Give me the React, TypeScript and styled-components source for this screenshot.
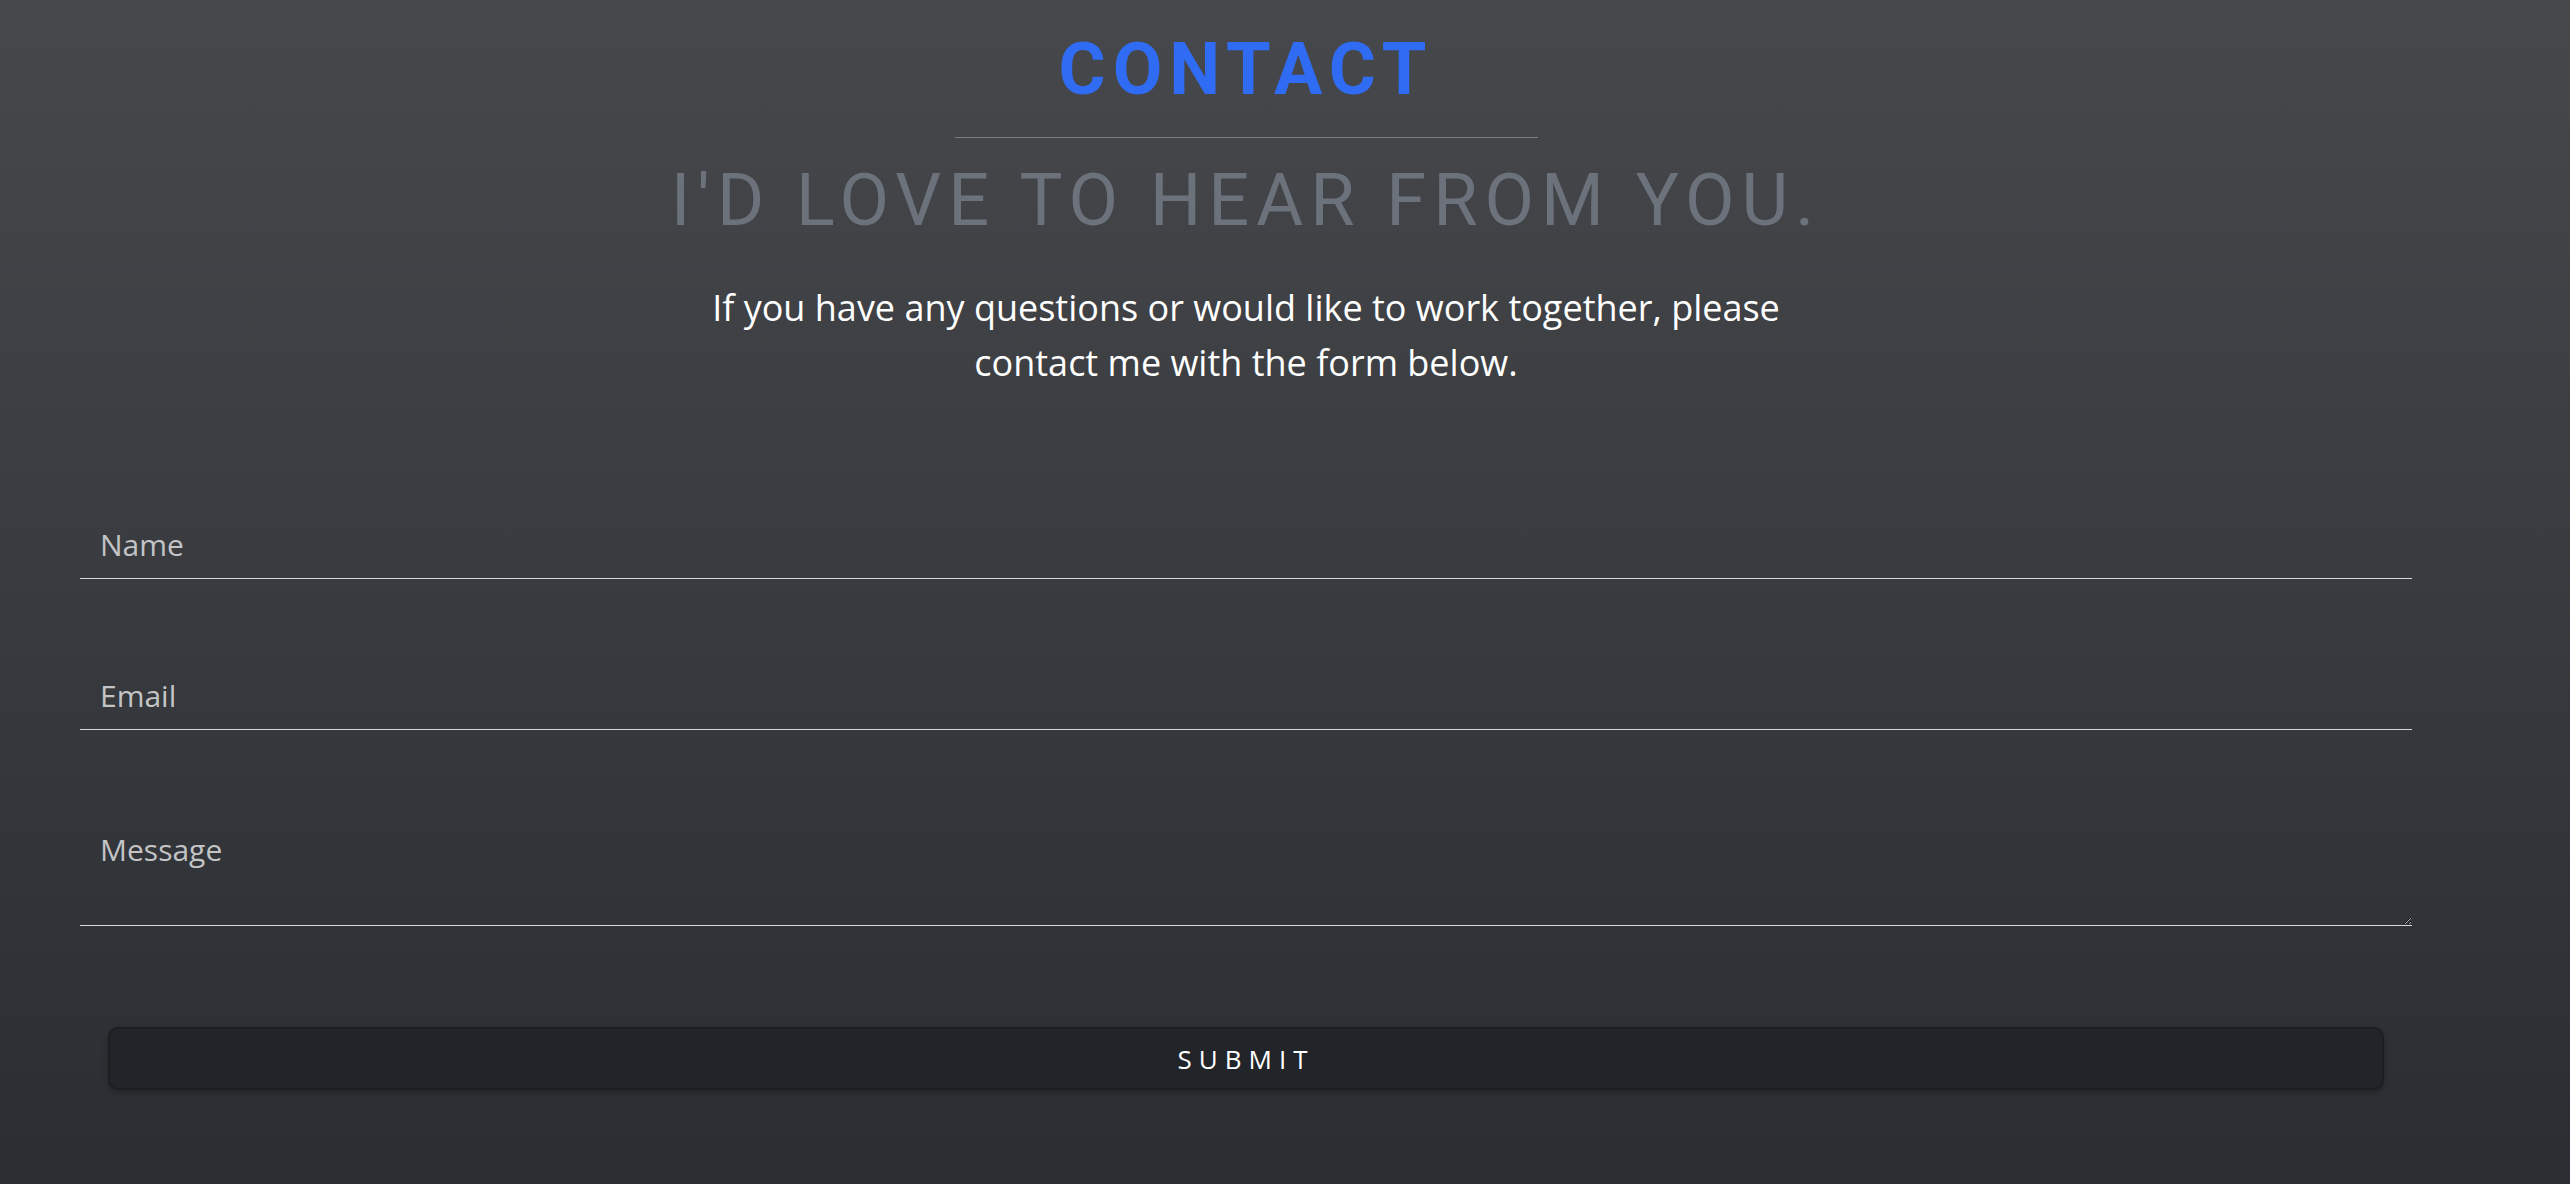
import React from "react";
import styled, { createGlobalStyle } from "styled-components";

const GlobalStyle = createGlobalStyle`
  html, body {
    margin: 0;
    padding: 0;
  }
  body {
    min-height: 100vh;
    background: linear-gradient(180deg, #46484c 0%, #2a2d31 100%);
    background-attachment: fixed;
    font-family: "Open Sans", "Noto Sans", sans-serif;
  }
  * { box-sizing: border-box; }
`;

const Section = styled.section`
  width: 2492px;
  display: flex;
  flex-direction: column;
  align-items: center;
  padding-top: 34px;
  padding-bottom: 60px;
`;

const Title = styled.h1`
  margin: 0;
  font-family: Roboto, "Liberation Sans", sans-serif;
  font-weight: 700;
  font-size: 72px;
  line-height: 1;
  letter-spacing: 7px;
  color: #2f6cf3;
  text-transform: uppercase;
`;

const Divider = styled.hr`
  width: 583px;
  margin: 31px 0 0;
  border: none;
  height: 1px;
  background: rgba(255, 255, 255, 0.3);
`;

const Subtitle = styled.h2`
  margin: 27px 0 0;
  font-family: Roboto, "Liberation Sans", sans-serif;
  font-weight: 400;
  font-size: 72px;
  line-height: 1;
  letter-spacing: 7px;
  color: #6b727b;
  text-transform: uppercase;
`;

const Intro = styled.p`
  margin: 43px 0 0;
  width: 1120px;
  font-family: "Open Sans", "Noto Sans", sans-serif;
  font-size: 36px;
  line-height: 55px;
  color: #ffffff;
  text-align: center;
`;

const Form = styled.form`
  width: 100%;
  margin-top: 127px;
  padding: 0 80px;
  display: flex;
  flex-direction: column;
`;

const Fields = styled.div`
  display: flex;
  flex-direction: column;
  gap: 89px;
`;

const fieldStyles = `
  width: 100%;
  display: block;
  background: transparent;
  border: none;
  border-bottom: 1px solid #d6d6d8;
  border-radius: 0;
  outline: none;
  padding: 10px 20px;
  font-family: "Open Sans", "Noto Sans", sans-serif;
  font-size: 30px;
  line-height: normal;
  color: #ffffff;
  &::placeholder {
    color: #c3c4c6;
    opacity: 1;
  }
`;

const Input = styled.input`
  ${fieldStyles}
  height: 62px;
  padding-top: 7px;
  padding-bottom: 13px;
`;

const TextArea = styled.textarea`
  ${fieldStyles}
  height: 107px;
  resize: vertical;
`;

const Submit = styled.button`
  margin: 101px 28px 0;
  height: 63px;
  background: #212429;
  border: 2px solid #1d1e20;
  border-radius: 10px;
  box-shadow: 0 2px 6px rgba(0, 0, 0, 0.25);
  color: #ffffff;
  font-family: "Open Sans", "Noto Sans", sans-serif;
  font-size: 26px;
  letter-spacing: 7px;
  text-transform: uppercase;
  cursor: pointer;
  padding: 0;
`;

export default function App() {
  return (
    <>
      <GlobalStyle />
      <Section>
        <Title>Contact</Title>
        <Divider />
        <Subtitle>I'd love to hear from you.</Subtitle>
        <Intro>
          If you have any questions or would like to work together, please
          contact me with the form below.
        </Intro>
        <Form onSubmit={(e) => e.preventDefault()}>
          <Fields>
            <Input type="text" name="name" placeholder="Name" />
            <Input type="email" name="email" placeholder="Email" />
            <TextArea name="message" placeholder="Message" />
          </Fields>
          <Submit type="submit">Submit</Submit>
        </Form>
      </Section>
    </>
  );
}
